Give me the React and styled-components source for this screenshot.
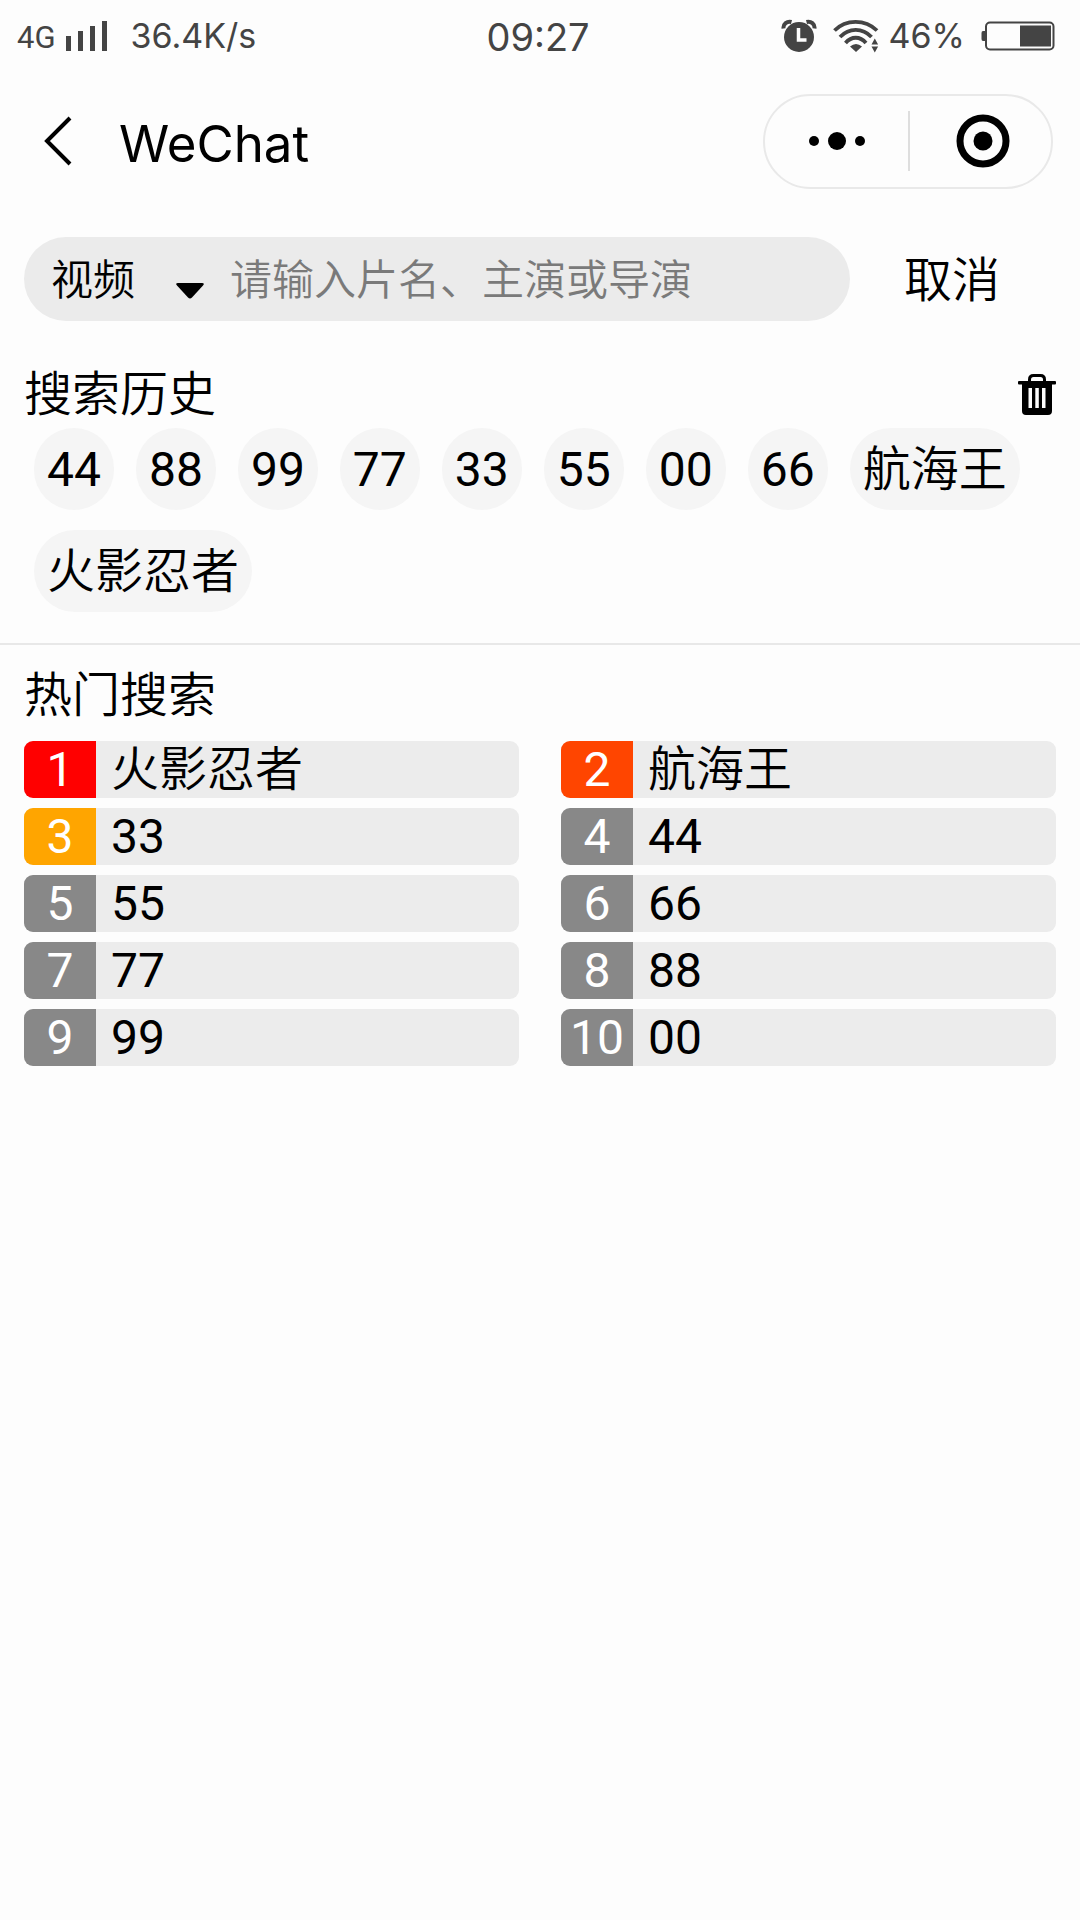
import React, { useState } from "react";
import styled, { createGlobalStyle } from "styled-components";

const GlobalStyle = createGlobalStyle`
  *, *::before, *::after { box-sizing: border-box; }
  html, body { margin: 0; padding: 0; background: #fdfdfd; }
  body {
    font-family: Roboto, "Noto Sans CJK SC", sans-serif;
    font-size: 48px;
    line-height: 66px;
    color: #000;
  }
  button, input, select { font: inherit; color: inherit; margin: 0; padding: 0; border: 0; background: none; }
  h1, h2, ul, ol { margin: 0; padding: 0; font: inherit; list-style: none; }
  svg { display: block; flex: none; }
`;

// Chinese text is set a step lighter than digits so that both look even.
const HAN_WEIGHT = 350;
const weightOf = (text) => (/^\d+$/.test(text) ? 400 : HAN_WEIGHT);

const Page = styled.div`
  display: flex;
  flex-direction: column;
  min-height: 100vh;
`;

const StatusBar = styled.div`
  display: grid;
  grid-template-columns: 1fr auto 1fr;
  align-items: center;
  height: 72px;
  padding: 0 25px 0 17px;
  font-family: Inter, sans-serif;
  font-size: 34px;
  line-height: 40px;
  color: #444;
`;

const StatusGroup = styled.div`
  display: flex;
  align-items: center;
  justify-content: ${(p) => (p.$end ? "flex-end" : "flex-start")};
  gap: ${(p) => p.$gap}px;
`;

const Network = styled.span`
  font-family: Roboto, sans-serif;
  font-size: 31px;
  padding-top: 4px;
`;

const Clock = styled.time`
  padding: 2px 0 0 4px;
  font-size: 38px;
`;

const Header = styled.header`
  display: flex;
  align-items: center;
  height: 138px;
  padding: 0 27px 0 32px;
`;

const IconButton = styled.button`
  display: flex;
  align-items: center;
  justify-content: center;
  cursor: pointer;
`;

const BackButton = styled(IconButton)`
  width: 52px;
  height: 72px;
`;

const Title = styled.h1`
  flex: 1;
  padding: 6px 0 0 35px;
  font-family: Inter, sans-serif;
  font-size: 51px;
  font-weight: 400;
`;

const Capsule = styled.div`
  display: flex;
  align-items: center;
  width: 290px;
  height: 95px;
  border: 2px solid #e9e9e9;
  border-radius: 48px;
`;

const CapsuleButton = styled(IconButton)`
  width: 50%;
  height: 60px;

  & + & {
    padding-left: 4px;
    border-left: 2px solid #dedede;
  }
`;

const SearchRow = styled.form`
  display: flex;
  align-items: center;
  padding: 27px 80px 0 24px;
  font-weight: ${HAN_WEIGHT};
`;

const SearchBox = styled.div`
  display: flex;
  align-items: center;
  flex: 1;
  min-width: 0;
  height: 84px;
  padding: 3px 28px 0 27px;
  border-radius: 42px;
  background: #ebebeb;
  font-size: 42px;
`;

const KindPicker = styled.label`
  display: grid;
  align-items: center;
  width: 153px;

  & > * {
    grid-area: 1 / 1;
  }

  & > svg {
    justify-self: end;
    margin-top: 20px;
    pointer-events: none;
  }
`;

const KindSelect = styled.select`
  appearance: none;
  width: 100%;
  height: 66px;
  outline: none;
`;

const SearchInput = styled.input`
  flex: 1;
  min-width: 0;
  height: 66px;
  margin-left: 26px;
  outline: none;

  &::placeholder {
    color: #7a7a7a;
    opacity: 1;
  }
`;

const CancelButton = styled.button`
  margin-left: 54px;
  padding-top: 4px;
  cursor: pointer;
`;

const HistorySection = styled.section`
  padding: 41px 24px 31px;
  border-bottom: 2px solid #e8e8e8;
`;

const HotSection = styled.section`
  padding: 18px 24px;
`;

const SectionHead = styled.div`
  display: flex;
  align-items: center;
  justify-content: space-between;
`;

const SectionTitle = styled.h2`
  font-weight: ${HAN_WEIGHT};
`;

const ChipList = styled.ul`
  display: flex;
  flex-wrap: wrap;
  gap: 20px 22px;
  padding-left: 10px;
`;

const Chip = styled.button`
  display: block;
  height: 82px;
  padding: 2px 13px 0;
  border-radius: 41px;
  background: #f5f5f5;
  font-weight: ${(p) => p.$weight};
  cursor: pointer;
`;

const HotList = styled.ol`
  display: grid;
  grid-template-columns: 1fr 1fr;
  gap: 10px 42px;
  padding-top: 12px;
`;

const HotRow = styled.a`
  display: flex;
  height: 57px;
  border-radius: 9px;
  overflow: hidden;
  background: #ececec;
  line-height: 57px;
  color: inherit;
  text-decoration: none;
`;

const rankColors = { 1: "#ff0000", 2: "#ff4500", 3: "#ffa500" };

const Rank = styled.span`
  width: 72px;
  background: ${(p) => rankColors[p.$rank] || "#888"};
  color: #fff;
  text-align: center;
`;

const HotName = styled.span`
  padding-left: 15px;
  font-weight: ${(p) => p.$weight};
`;

const Speed = styled.span`
  padding-left: 13px;
`;

const SignalIcon = () => (
  <svg width="42" height="32" viewBox="0 0 42 32" fill="#444" aria-hidden="true">
    <rect x="0" y="16" width="5" height="15" />
    <rect x="12" y="11" width="5" height="20" />
    <rect x="24" y="6" width="5" height="25" />
    <rect x="36" y="1" width="5" height="30" />
  </svg>
);

const AlarmIcon = () => (
  <svg width="36" height="34" viewBox="0 0 36 34" aria-hidden="true">
    <circle cx="18" cy="18" r="15" fill="#444" />
    <path d="M2.5 9.500C2 5 6 1.800 10.500 3" fill="none" stroke="#444" strokeWidth="4" />
    <path d="M33.500 9.500C34 5 30 1.800 25.500 3" fill="none" stroke="#444" strokeWidth="4" />
    <path d="M17.500 9v12h8" fill="none" stroke="#fdfdfd" strokeWidth="3.500" />
  </svg>
);

const WifiIcon = () => (
  <svg width="46" height="34" viewBox="0 0 46 34" aria-hidden="true">
    <g fill="none" stroke="#444" strokeWidth="3.800">
      <path d="M1.500 11.500C13 0 32 0 44 11.500" />
      <path d="M7 18C16 8.500 29.500 8.500 38.500 18" />
      <path d="M12.500 24C18.500 17 27 17 33 24" />
    </g>
    <path d="M17 27.500q6-5 12 0L23 33z" fill="#444" />
    <path d="M38.500 25.500l3.300-6 3.300 6zM38.500 27.500h6.600l-3.300 6z" fill="#444" />
  </svg>
);

const BatteryIcon = () => (
  <svg width="74" height="30" viewBox="0 0 74 30" aria-hidden="true">
    <rect x="5" y="1.500" width="67.500" height="27" rx="4" fill="none" stroke="#444" strokeWidth="2" />
    <path d="M4 10h-2q-1.500 0-1.500 2v6q0 2 1.500 2h2z" fill="#444" />
    <rect x="39" y="4.500" width="31" height="21" fill="#444" />
  </svg>
);

const BackIcon = () => (
  <svg width="30" height="52" viewBox="0 0 30 52" aria-hidden="true">
    <path d="M27 3L4 26l23 23" fill="none" stroke="#000" strokeWidth="4" />
  </svg>
);

const MoreIcon = () => (
  <svg width="58" height="20" viewBox="0 0 58 20" aria-hidden="true">
    <circle cx="6" cy="10" r="5" />
    <circle cx="29" cy="10" r="9" />
    <circle cx="52" cy="10" r="5" />
  </svg>
);

const TargetIcon = () => (
  <svg width="54" height="54" viewBox="0 0 54 54" aria-hidden="true">
    <circle cx="27" cy="27" r="23" fill="none" stroke="#000" strokeWidth="7" />
    <circle cx="27" cy="27" r="9.500" />
  </svg>
);

const CaretIcon = () => (
  <svg width="28" height="16" viewBox="0 0 28 16" aria-hidden="true">
    <path d="M2 0h24q3 0 1 2.500L16 14.500q-2 2-4 0L1 2.500Q-1 0 2 0z" />
  </svg>
);

const TrashIcon = () => (
  <svg width="38" height="43" viewBox="0 0 38 43" aria-hidden="true">
    <path d="M11.500 8V5.500q0-4 4-4h7q4 0 4 4V8" fill="none" stroke="#000" strokeWidth="3" />
    <rect x="0" y="7" width="38" height="3.500" rx="1" />
    <path
      fillRule="evenodd"
      d="M4 9h30v28q0 4-4 4H8q-4 0-4-4zM10.500 14v20h3.500V14zM17.300 14v20h3.500V14zM24 14v20h3.500V14z"
    />
  </svg>
);

const history = ["44", "88", "99", "77", "33", "55", "00", "66", "航海王", "火影忍者"];
const hot = ["火影忍者", "航海王", "33", "44", "55", "66", "77", "88", "99", "00"];

export default function App() {
  const [query, setQuery] = useState("");

  return (
    <Page>
      <GlobalStyle />
      <StatusBar>
        <StatusGroup $gap={10}>
          <Network>4G</Network>
          <SignalIcon />
          <Speed>36.4K/s</Speed>
        </StatusGroup>
        <Clock>09:27</Clock>
        <StatusGroup $end $gap={16}>
          <AlarmIcon />
          <StatusGroup $gap={10}>
            <WifiIcon />
            <span>46%</span>
          </StatusGroup>
          <BatteryIcon />
        </StatusGroup>
      </StatusBar>

      <Header>
        <BackButton type="button" aria-label="返回">
          <BackIcon />
        </BackButton>
        <Title>WeChat</Title>
        <Capsule>
          <CapsuleButton type="button" aria-label="更多">
            <MoreIcon />
          </CapsuleButton>
          <CapsuleButton type="button" aria-label="关闭">
            <TargetIcon />
          </CapsuleButton>
        </Capsule>
      </Header>

      <main>
        <SearchRow role="search" onSubmit={(e) => e.preventDefault()}>
          <SearchBox>
            <KindPicker>
              <KindSelect aria-label="类型">
                <option>视频</option>
              </KindSelect>
              <CaretIcon />
            </KindPicker>
            <SearchInput
              type="text"
              aria-label="搜索"
              placeholder="请输入片名、主演或导演"
              value={query}
              onChange={(e) => setQuery(e.target.value)}
            />
          </SearchBox>
          <CancelButton type="button" onClick={() => setQuery("")}>
            取消
          </CancelButton>
        </SearchRow>

        <HistorySection>
          <SectionHead>
            <SectionTitle>搜索历史</SectionTitle>
            <IconButton type="button" aria-label="清空">
              <TrashIcon />
            </IconButton>
          </SectionHead>
          <ChipList>
            {history.map((word) => (
              <li key={word}>
                <Chip type="button" $weight={weightOf(word)} onClick={() => setQuery(word)}>
                  {word}
                </Chip>
              </li>
            ))}
          </ChipList>
        </HistorySection>

        <HotSection>
          <SectionHead>
            <SectionTitle>热门搜索</SectionTitle>
          </SectionHead>
          <HotList>
            {hot.map((word, i) => (
              <li key={word}>
                <HotRow href={`#${word}`}>
                  <Rank $rank={i + 1}>{i + 1}</Rank>
                  <HotName $weight={weightOf(word)}>{word}</HotName>
                </HotRow>
              </li>
            ))}
          </HotList>
        </HotSection>
      </main>
    </Page>
  );
}
